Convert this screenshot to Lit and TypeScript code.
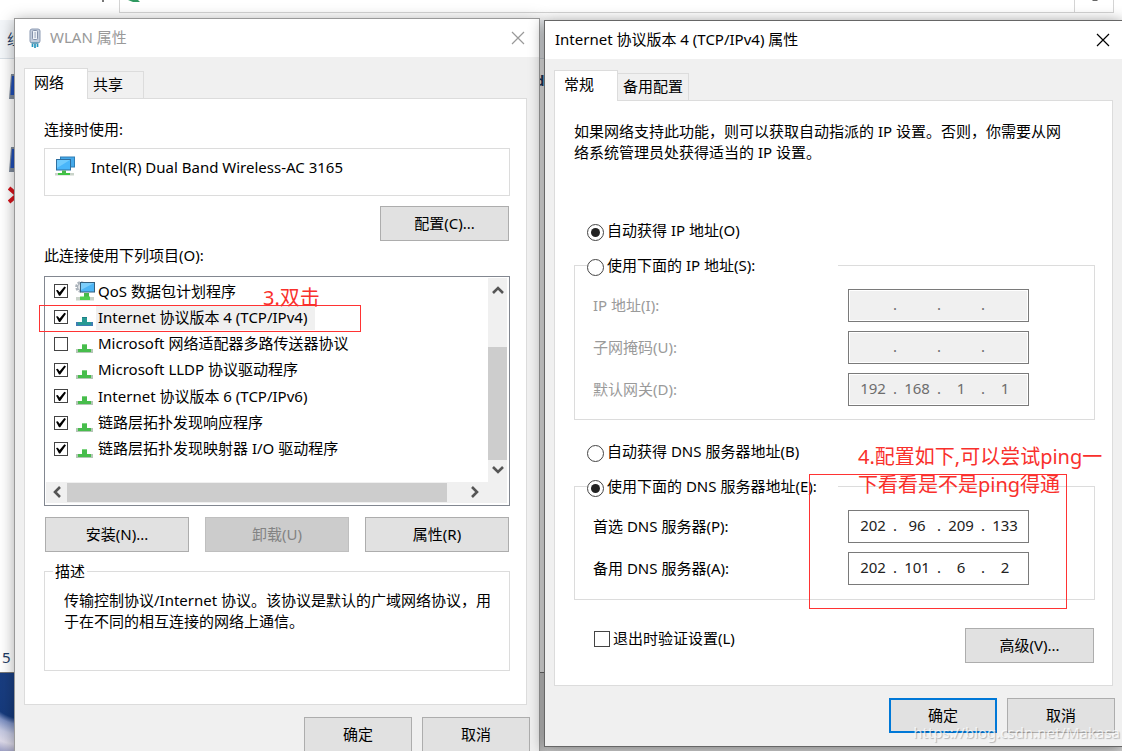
import { LitElement, html, css, svg, nothing } from "lit";
import { customElement, property } from "lit/decorators.js";
import { classMap } from "lit/directives/class-map.js";

interface NetItem {
  name: string;
  on: boolean;
  selected?: boolean;
  icon?: "qos";
}

interface Address {
  id: string;
  label: string;
  octets: string[];
}

const ITEMS: NetItem[] = [
  { name: "QoS 数据包计划程序", on: true, icon: "qos" },
  { name: "Internet 协议版本 4 (TCP/IPv4)", on: true, selected: true },
  { name: "Microsoft 网络适配器多路传送器协议", on: false },
  { name: "Microsoft LLDP 协议驱动程序", on: true },
  { name: "Internet 协议版本 6 (TCP/IPv6)", on: true },
  { name: "链路层拓扑发现响应程序", on: true },
  { name: "链路层拓扑发现映射器 I/O 驱动程序", on: true },
];

const IP_FIELDS: Address[] = [
  { id: "ip", label: "IP 地址(I):", octets: ["", "", "", ""] },
  { id: "mask", label: "子网掩码(U):", octets: ["", "", "", ""] },
  { id: "gateway", label: "默认网关(D):", octets: ["192", "168", "1", "1"] },
];

const DNS_FIELDS: Address[] = [
  { id: "dns1", label: "首选 DNS 服务器(P):", octets: ["202", "96", "209", "133"] },
  { id: "dns2", label: "备用 DNS 服务器(A):", octets: ["202", "101", "6", "2"] },
];

const plugIcon = html`<svg width="12" height="20" viewBox="0 0 12 20" aria-hidden="true">
  <rect x="1" y="1" width="10" height="14" rx="2" fill="#c3cddd" stroke="#8d9bb3"></rect>
  <rect x="3.5" y="2.500" width="5" height="9" rx="1" fill="#eef2f8" stroke="#8391aa"></rect>
  <rect x="5.500" y="4" width="1.200" height="6" fill="#a5b1c5"></rect>
  <path d="M2 14h8l-1 2H3z" fill="#6fa3bd"></path>
  <path d="M3.500 16v3M6 16v4M8.500 16v3" stroke="#2795bd" stroke-width="1.700"></path>
</svg>`;

const adapterIcon = html`<svg width="20" height="20" viewBox="0 0 20 20" aria-hidden="true">
  <rect x="5.500" y="1" width="14" height="10" fill="#45a9ea" stroke="#2f7fb5"></rect>
  <rect x="1.500" y="3.500" width="14" height="10.500" fill="#49b6fa" stroke="#2f6f9f"></rect>
  <path d="M2 4h13L2 12z" fill="#8ad8ff" opacity=".6"></path>
  <path d="M7 14.500h4v2.500H7z" fill="#49b84c"></path>
  <path d="M0 17h19v2.500H0z" fill="#c9d3c9"></path>
  <path d="M3 17h12v2H3z" fill="#3fc443"></path>
</svg>`;

const qosIcon = html`<svg width="20" height="20" viewBox="0 0 20 20" aria-hidden="true">
  <circle cx="6" cy="6" r="4.300" fill="none" stroke="#aab2ba" stroke-width="3" stroke-dasharray="2.200 1.100"></circle>
  <circle cx="6" cy="6" r="3.500" fill="#dfe3e7" stroke="#a5adb5"></circle>
  <rect x="5.500" y="1.500" width="14" height="9.500" fill="#4db5f5" stroke="#34607f"></rect>
  <path d="M6 2h13L6 9z" fill="#9ce0ff" opacity=".6"></path>
  <path d="M9 12h5v4H9z" fill="#49b84c"></path>
  <path d="M1 16h18v3.500H1z" fill="#c9d3c9"></path>
  <path d="M5 15.500h10v3.500H5z" fill="#4fce4f"></path>
</svg>`;

const protocolIcon = (selected: boolean) => {
  const main = selected ? "#289a94" : "#47bd4c";
  const side = selected ? "#3f7fb4" : "#b4c6b6";
  return html`<svg width="20" height="20" viewBox="0 0 20 20" aria-hidden="true">
    ${svg`<path d="M1 15h17v4H1z" fill=${side}></path>
    <path d="M3 15h13v3H3z" fill=${main}></path>
    <path d="M7 10h5v5H7z" fill=${main}></path>
    <path d="M7 10h5v1H7z" fill=${selected ? "#1c7f86" : "#7fd482"}></path>`}
  </svg>`;
};

const chevron = (d: string) =>
  html`<svg width="12" height="12" viewBox="0 0 12 12" aria-hidden="true">
    <path d=${d} fill="none" stroke="#555" stroke-width="2.600"></path>
  </svg>`;

const shared = css`
  * {
    box-sizing: border-box;
  }
  button,
  input {
    font: inherit;
    color: inherit;
    margin: 0;
  }
  svg {
    display: block;
    flex: none;
  }
`;

@customElement("dialog-window")
class DialogWindow extends LitElement {
  @property() heading = "";
  @property({ type: Array }) tabs: string[] = [];
  @property({ type: Boolean, reflect: true }) active = false;

  static styles = [
    shared,
    css`
      :host {
        display: block;
        box-sizing: border-box;
        background: #f0f0f0;
        border: 1px solid #999;
        box-shadow: 0 2px 14px rgba(0, 0, 0, 0.35);
      }
      :host([active]) {
        border-color: #666;
        border-right: 0;
        box-shadow: 0 2px 14px rgba(0, 0, 0, 0.45);
      }
      .title {
        display: flex;
        align-items: center;
        height: 38px;
        padding: 0 14px;
        gap: 9px;
        background: #fff;
        color: #999;
      }
      :host([active]) .title {
        padding: 0 12px 0 10px;
        gap: 0;
        color: #000;
      }
      h2 {
        flex: 1;
        margin: 0;
        padding-bottom: 2px;
        font-size: 15px;
        font-weight: 400;
        line-height: 21px;
      }
      .close {
        border: 0;
        padding: 0;
        background: none;
      }
      .body {
        padding: 11px 12px 0 9px;
      }
      :host([active]) .body {
        padding-right: 9px;
      }
      .tabs {
        display: flex;
        align-items: flex-end;
      }
      .tab {
        height: 27px;
        min-width: 56px;
        padding: 0 5px 1px;
        border: 1px solid #dcdcdc;
        border-left: 0;
        border-bottom: 0;
        background: #f0f0f0;
        text-align: left;
      }
      .tab.current {
        position: relative;
        height: 31px;
        width: 64px;
        margin-bottom: -1px;
        padding: 0 9px 4px;
        border-left: 1px solid #dcdcdc;
        background: #fff;
      }
      .panel {
        padding: 20px 16px 0 19px;
        border: 1px solid #dcdcdc;
        background: #fff;
      }
      :host([active]) .panel {
        padding-right: 17px;
      }
      .foot {
        display: flex;
        justify-content: flex-end;
        gap: 10px;
        padding: 12px 9px 13px;
      }
      :host([active]) .foot {
        padding-right: 7px;
      }
    `,
  ];

  render() {
    return html`
      <header class="title">
        <slot name="icon"></slot>
        <h2>${this.heading}</h2>
        <button class="close" aria-label="关闭">
          <svg width="14" height="14" viewBox="0 0 14 14">
            <path d="M1 1l12 12M13 1L1 13" stroke="currentColor" stroke-width="1.200"></path>
          </svg>
        </button>
      </header>
      <div class="body">
        <div class="tabs" role="tablist">
          ${this.tabs.map(
            (t, i) => html`<button
              role="tab"
              aria-selected=${i === 0 ? "true" : "false"}
              class=${classMap({ tab: true, current: i === 0 })}
            >${t}</button>`
          )}
        </div>
        <div class="panel"><slot></slot></div>
      </div>
      <footer class="foot"><slot name="foot"></slot></footer>
    `;
  }
}

@customElement("app-root")
class AppRoot extends LitElement {
  static styles = [
    shared,
    css`
      :host {
        display: block;
        position: relative;
        height: 100vh;
        overflow: hidden;
        background: #fff;
        color: #000;
        font: 15px/21px "Noto Sans", "Noto Sans CJK SC", sans-serif;
      }

      /* explorer window behind the dialogs */
      .explorer {
        display: flex;
        flex-direction: column;
        height: 100%;
        color: #1e3c64;
      }
      .topline {
        display: flex;
        height: 13px;
        margin: 0 8px 7px 102px;
      }
      .topline b {
        width: 2px;
        height: 2px;
        margin-right: 15px;
        background: #777;
      }
      .address {
        display: flex;
        flex: 1;
        justify-content: space-between;
        padding-left: 7px;
        border: 1px solid #d4d4d4;
        border-top: 0;
      }
      .address i {
        width: 39px;
        padding-left: 16px;
        border-left: 1px solid #d4d4d4;
      }
      .toolbar {
        height: 39px;
        padding: 9px 0 0 7px;
        border-bottom: 1px solid #d8dfe6;
        background: #f3f6f9;
      }
      .files {
        display: flex;
        flex: 1;
        justify-content: space-between;
        padding: 14px 0 0 8px;
      }
      .icons {
        display: grid;
        align-content: start;
        row-gap: 46px;
      }
      .icons .cross {
        margin-top: -34px;
      }
      .column {
        width: calc(100% - 527px);
        font-weight: 700;
        line-height: 14px;
      }
      .status {
        height: 25px;
        padding-left: 2px;
      }
      .wallpaper {
        height: 79px;
        border-top: 1px solid #777;
        background: #d8d8d8;
      }
      .wallpaper div {
        width: 40px;
        height: 100%;
        background: radial-gradient(circle at 24px 6px, #1b4084 0, #163a7c 40px, #7d90c2 46px, #c3c7e0 56px, #dcd9e8 66px, #8186b6 80px);
      }

      .wlan,
      .ipv4 {
        position: absolute;
      }
      .wlan {
        left: 14px;
        top: 18px;
        width: 526px;
      }
      .ipv4 {
        left: 544px;
        right: 0;
        top: 20px;
      }

      .btn {
        height: 35px;
        padding: 0 8px 1px;
        border: 1px solid #adadad;
        background: #e1e1e1;
        text-align: center;
      }
      .btn:disabled {
        border-color: #bfbfbf;
        background: #ccc;
        color: #838383;
      }
      .btn.wide {
        width: 129px;
      }
      .btn.end {
        width: 108px;
      }
      .btn.primary {
        border: 2px solid #0078d7;
      }
      .right {
        display: flex;
        justify-content: flex-end;
        margin-right: 1px;
      }

      .adapter {
        display: flex;
        align-items: center;
        gap: 16px;
        height: 48px;
        margin: 8px 0 10px;
        padding: 0 10px 10px;
        border: 1px solid #dcdcdc;
      }
      .adapter svg {
        margin-bottom: 2px;
      }
      .list-label {
        margin-top: 4px;
      }
      .list {
        display: grid;
        grid-template-columns: 1fr 19px;
        margin-top: 10px;
        padding: 1px 2px 2px 1px;
        border: 1px solid #828790;
      }
      .rows {
        display: grid;
        grid-auto-rows: 1fr;
        height: 184px;
        margin: 0 0 20px;
        padding: 0 0 0 8px;
        list-style: none;
      }
      .row {
        display: flex;
        align-items: center;
      }
      .row label {
        display: flex;
        align-items: center;
      }
      .row svg {
        margin: 0 1px 0 7px;
      }
      .row .name {
        padding: 2px 8px 2px 2px;
        white-space: nowrap;
      }
      .row .name.selected {
        background: #f0f0f0;
      }
      .vbar {
        display: flex;
        flex-direction: column;
        align-items: center;
        background: #f0f0f0;
        padding: 6px 0 5px;
      }
      .vbar i {
        width: 19px;
        height: 113px;
        margin: 51px 0 4px;
        background: #cdcdcd;
      }
      .hbar {
        grid-column: 1 / 3;
        display: flex;
        align-items: center;
        height: 21px;
        padding: 0 0 1px 5px;
        background: #f0f0f0;
      }
      .hbar i {
        width: 380px;
        height: 19px;
        margin: 0 22px 0 4px;
        background: #cdcdcd;
      }
      .triple {
        display: grid;
        grid-template-columns: repeat(3, 1fr);
        gap: 16px;
        margin: 11px 1px 9px;
      }

      fieldset {
        min-width: 0;
        margin: 0;
        border: 1px solid #dcdcdc;
      }
      legend {
        margin: 0;
        padding: 0;
      }
      .about {
        height: 110px;
        margin-bottom: 33px;
        padding: 8px 14px 0 19px;
      }
      .about legend {
        margin-left: -11px;
        padding: 0 2px;
      }
      p {
        margin: 0;
      }

      input[type="checkbox"],
      input[type="radio"] {
        appearance: none;
        display: grid;
        place-items: center;
        flex: none;
        border: 1px solid #444;
        background: #fff;
      }
      input[type="checkbox"] {
        width: 14px;
        height: 14px;
      }
      input[type="checkbox"]:checked::before {
        content: "";
        width: 10px;
        height: 10px;
        background: #000;
        clip-path: polygon(0 42%, 18% 38%, 36% 62%, 84% 4%, 100% 14%, 42% 96%, 30% 96%);
      }
      input[type="radio"] {
        width: 17px;
        height: 17px;
        margin-top: 3px;
        border-radius: 50%;
      }
      input[type="radio"]:checked::before {
        content: "";
        width: 9px;
        height: 9px;
        border-radius: 50%;
        background: #222;
      }

      .choice {
        display: flex;
        align-items: center;
        gap: 3px;
      }
      .intro {
        padding-right: 24px;
      }
      .first {
        margin: 57px 0 14px 13px;
      }
      .second {
        margin: 21px 0 14px 13px;
      }
      .group {
        display: grid;
        gap: 9px;
        padding: 13px 65px 13px 18px;
      }
      .group.dns {
        padding-bottom: 14px;
      }
      .group legend {
        width: 251px;
        margin-left: -6px;
      }
      .field {
        display: flex;
        align-items: center;
        justify-content: space-between;
      }
      .field.off {
        color: #9a9a9a;
      }
      .field label {
        padding-bottom: 1px;
      }
      .ip {
        display: flex;
        align-items: center;
        width: 181px;
        height: 33px;
        padding: 0 4px 3px 5px;
        border: 1px solid #7a7a7a;
        color: #222;
      }
      .off .ip {
        background: #f0f0f0;
        box-shadow: inset 0 0 0 1px #fff;
        color: #6d6d6d;
      }
      .ip input {
        flex: 1;
        width: 0;
        height: 21px;
        padding: 0;
        border: 0;
        background: none;
        text-align: center;
      }
      .ip i {
        width: 6px;
        font-style: normal;
        text-align: center;
      }
      .exit {
        display: flex;
        align-items: flex-start;
        justify-content: space-between;
        margin: 28px 1px 22px 20px;
      }
      .exit input {
        width: 16px;
        height: 16px;
      }

      /* red notes drawn over both dialogs */
      .mark,
      .note {
        position: absolute;
        pointer-events: none;
      }
      .mark {
        border: 1px solid #f33;
      }
      .note {
        color: #f9302c;
        font-size: 20px;
        line-height: 28px;
      }
      .mark.one {
        left: 39px;
        top: 305px;
        width: 322px;
        height: 27px;
      }
      .mark.two {
        left: 809px;
        top: 474px;
        width: 258px;
        height: 135px;
      }
      .note.one {
        left: 263px;
        top: 284px;
      }
      .note.two {
        left: 858px;
        top: 443px;
        white-space: nowrap;
      }
      .credit {
        position: absolute;
        right: 2px;
        bottom: 8px;
        color: rgba(255, 255, 255, 0.75);
        text-shadow: 1px 1px 1px rgba(0, 0, 0, 0.25);
      }
    `,
  ];

  private field(a: Address, off: boolean) {
    return html`<div class=${classMap({ field: true, off })}>
      <label for=${a.id}>${a.label}</label>
      <div class="ip" role="group" aria-label=${a.label}>
        ${a.octets.map(
          (o, i) => html`${i ? html`<i>.</i>` : nothing}<input
              type="text"
              id=${i ? `${a.id}-${i}` : a.id}
              aria-label=${`${a.label} ${i + 1}`}
              maxlength="3"
              .value=${o}
              ?disabled=${off}
            />`
        )}
      </div>
    </div>`;
  }

  private choice(name: string, label: string, checked: boolean) {
    return html`<label class="choice"
      ><input type="radio" name=${name} ?checked=${checked} /><span>${label}</span></label
    >`;
  }

  private explorer() {
    const doc = html`<svg width="16" height="27" viewBox="0 0 16 27" aria-hidden="true">
      <path d="M3 1h13v25H1z" fill="#7f8b9c"></path>
      <path d="M4 3h12v19H2.500z" fill="#2150b8"></path>
    </svg>`;
    return html`<div class="explorer" aria-hidden="true">
      <div class="topline">
        <b></b>
        <div class="address">
          <svg width="14" height="3" viewBox="0 0 14 3"><path d="M1 0h10l2 2H6z" fill="#2f9960"></path></svg>
          <i><svg width="8" height="2" viewBox="0 0 8 2"><path d="M1 0h6L6 1H2z" fill="#666"></path></svg></i>
        </div>
      </div>
      <div class="toolbar">组织</div>
      <div class="files">
        <div class="icons">
          ${doc}${doc}
          <svg class="cross" width="18" height="20" viewBox="0 0 18 20">
            <path d="M1 3l8 7-8 7M15 3L9 10l6 7" fill="none" stroke="#d8141c" stroke-width="4"></path>
          </svg>
        </div>
        <div class="column">d</div>
      </div>
      <div class="status">5</div>
      <div class="wallpaper"><div></div></div>
    </div>`;
  }

  render() {
    return html`
      ${this.explorer()}

      <dialog-window class="wlan" heading="WLAN 属性" .tabs=${["网络", "共享"]}>
        <span slot="icon">${plugIcon}</span>
        <div>连接时使用:</div>
        <div class="adapter">${adapterIcon}<span>Intel(R) Dual Band Wireless-AC 3165</span></div>
        <div class="right"><button class="btn wide">配置(C)...</button></div>
        <div class="list-label">此连接使用下列项目(O):</div>
        <div class="list">
          <ul class="rows">
            ${ITEMS.map(
              (it) => html`<li class="row">
                <label
                  ><input type="checkbox" ?checked=${it.on} />${it.icon ? qosIcon : protocolIcon(!!it.selected)}<span
                    class=${classMap({ name: true, selected: !!it.selected })}
                    >${it.name}</span
                  ></label
                >
              </li>`
            )}
          </ul>
          <div class="vbar">${chevron("M1 9l5-5 5 5")}<i></i>${chevron("M1 3l5 5 5-5")}</div>
          <div class="hbar">${chevron("M9 1L4 6l5 5")}<i></i>${chevron("M3 1l5 5-5 5")}</div>
        </div>
        <div class="triple">
          <button class="btn">安装(N)...</button>
          <button class="btn" disabled>卸载(U)</button>
          <button class="btn">属性(R)</button>
        </div>
        <fieldset class="about">
          <legend>描述</legend>
          <p>传输控制协议/Internet 协议。该协议是默认的广域网络协议，用于在不同的相互连接的网络上通信。</p>
        </fieldset>
        <button slot="foot" class="btn end">确定</button>
        <button slot="foot" class="btn end">取消</button>
      </dialog-window>

      <dialog-window
        class="ipv4"
        active
        heading="Internet 协议版本 4 (TCP/IPv4) 属性"
        .tabs=${["常规", "备用配置"]}
      >
        <p class="intro">
          如果网络支持此功能，则可以获取自动指派的 IP 设置。否则，你需要从网络系统管理员处获得适当的 IP 设置。
        </p>
        <div class="first">${this.choice("addr", "自动获得 IP 地址(O)", true)}</div>
        <fieldset class="group">
          <legend>${this.choice("addr", "使用下面的 IP 地址(S):", false)}</legend>
          ${IP_FIELDS.map((f) => this.field(f, true))}
        </fieldset>
        <div class="second">${this.choice("dns", "自动获得 DNS 服务器地址(B)", false)}</div>
        <fieldset class="group dns">
          <legend>${this.choice("dns", "使用下面的 DNS 服务器地址(E):", true)}</legend>
          ${DNS_FIELDS.map((f) => this.field(f, false))}
        </fieldset>
        <div class="exit">
          <label class="choice"><input type="checkbox" /><span>退出时验证设置(L)</span></label>
          <button class="btn wide">高级(V)...</button>
        </div>
        <button slot="foot" class="btn end primary">确定</button>
        <button slot="foot" class="btn end">取消</button>
      </dialog-window>

      <div class="mark one"></div>
      <div class="mark two"></div>
      <div class="note one">3.双击</div>
      <div class="note two">4.配置如下,可以尝试ping一<br />下看看是不是ping得通</div>
      <div class="credit">https://blog.csdn.net/Makasa</div>
    `;
  }
}
